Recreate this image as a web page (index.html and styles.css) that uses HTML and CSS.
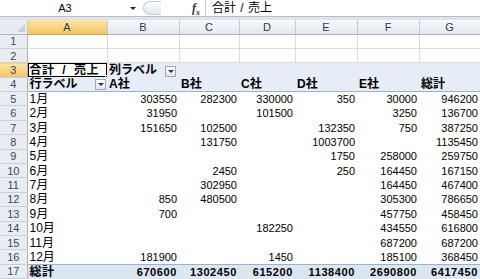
FILE: index.html
```html
<!DOCTYPE html>
<html lang="ja">
<head>
  <meta charset="UTF-8" />
  <title>ピボットテーブル</title>
  <link rel="stylesheet" href="styles.css">
</head>
<body>
  <div class="formula-bar">
    <div class="name-box">
      <span class="cell-ref">A3</span>
      <span class="caret"></span>
    </div>
    <div class="grip"></div>
    <div class="fx"><i>f</i><sub>x</sub></div>
    <div class="formula">合計 / 売上</div>
  </div>
  <div class="gap"></div>

  <table class="sheet">
    <colgroup>
      <col class="c-rh">
      <col class="c-a">
      <col class="c-b">
      <col class="c-c">
      <col class="c-d">
      <col class="c-e">
      <col class="c-f">
      <col class="c-g">
    </colgroup>
    <thead>
      <tr>
        <th class="corner"><span class="corner-tri"></span></th>
        <th class="sel">A</th>
        <th>B</th>
        <th>C</th>
        <th>D</th>
        <th>E</th>
        <th>F</th>
        <th>G</th>
      </tr>
    </thead>
    <tbody>
      <tr class="grid">
        <th>1</th><td></td><td></td><td></td><td></td><td></td><td></td><td></td>
      </tr>
      <tr class="grid">
        <th>2</th><td></td><td></td><td></td><td></td><td></td><td></td><td></td>
      </tr>
      <tr class="page-row">
        <th class="sel">3</th>
        <td class="active"><span class="label wide">合計 / 売上</span><span class="cursor"></span><span class="handle"></span></td>
        <td class="tint"><span class="label">列ラベル</span><span class="drop"></span></td>
        <td class="tint"></td><td class="tint"></td><td class="tint"></td><td class="tint"></td><td class="tint"></td>
      </tr>
      <tr class="head-row">
        <th>4</th>
        <td><div class="split"><span class="label">行ラベル</span><span class="drop"></span></div></td>
        <td><span class="label">A社</span></td>
        <td><span class="label">B社</span></td>
        <td><span class="label">C社</span></td>
        <td><span class="label">D社</span></td>
        <td><span class="label">E社</span></td>
        <td><span class="label">総計</span></td>
      </tr>
      <tr><th>5</th><td class="lbl">1月</td><td>303550</td><td>282300</td><td>330000</td><td>350</td><td>30000</td><td>946200</td></tr>
      <tr><th>6</th><td class="lbl">2月</td><td>31950</td><td></td><td>101500</td><td></td><td>3250</td><td>136700</td></tr>
      <tr><th>7</th><td class="lbl">3月</td><td>151650</td><td>102500</td><td></td><td>132350</td><td>750</td><td>387250</td></tr>
      <tr><th>8</th><td class="lbl">4月</td><td></td><td>131750</td><td></td><td>1003700</td><td></td><td>1135450</td></tr>
      <tr><th>9</th><td class="lbl">5月</td><td></td><td></td><td></td><td>1750</td><td>258000</td><td>259750</td></tr>
      <tr><th>10</th><td class="lbl">6月</td><td></td><td>2450</td><td></td><td>250</td><td>164450</td><td>167150</td></tr>
      <tr><th>11</th><td class="lbl">7月</td><td></td><td>302950</td><td></td><td></td><td>164450</td><td>467400</td></tr>
      <tr><th>12</th><td class="lbl">8月</td><td>850</td><td>480500</td><td></td><td></td><td>305300</td><td>786650</td></tr>
      <tr><th>13</th><td class="lbl">9月</td><td>700</td><td></td><td></td><td></td><td>457750</td><td>458450</td></tr>
      <tr><th>14</th><td class="lbl">10月</td><td></td><td></td><td>182250</td><td></td><td>434550</td><td>616800</td></tr>
      <tr><th>15</th><td class="lbl">11月</td><td></td><td></td><td></td><td></td><td>687200</td><td>687200</td></tr>
      <tr><th>16</th><td class="lbl">12月</td><td>181900</td><td></td><td>1450</td><td></td><td>185100</td><td>368450</td></tr>
      <tr class="total-row">
        <th>17</th><td class="lbl">総計</td><td>670600</td><td>1302450</td><td>615200</td><td>1138400</td><td>2690800</td><td>6417450</td>
      </tr>
    </tbody>
  </table>
</body>
</html>
```

FILE: styles.css
```css
* {
  box-sizing: border-box;
}

body {
  margin: 0;
  width: 480px;
  height: 279px;
  overflow: hidden;
  background: #ffffff;
  font-family: "Liberation Sans", "Noto Sans CJK JP", sans-serif;
  font-size: 11px;
  color: #000;
}

/* formula bar */
.formula-bar {
  display: flex;
  height: 17px;
  border-bottom: 1px solid #b6c0cc;
  background: #fff;
}

.name-box {
  width: 140px;
  display: flex;
  align-items: center;
}

.cell-ref {
  width: 130px;
  text-align: center;
  font-size: 11px;
}

.caret {
  width: 0;
  height: 0;
  border-left: 3px solid transparent;
  border-right: 3px solid transparent;
  border-top: 3px solid #222;
}

.grip {
  width: 18px;
  margin: 1px 0 1px 3px;
  border: 1px solid #c3cad3;
  border-right: none;
  border-radius: 8px 0 0 8px;
  background: linear-gradient(#fbfcfd, #e3e7ec);
}

.fx {
  width: 44px;
  padding-right: 5px;
  text-align: right;
  font-family: "Liberation Serif", serif;
  font-size: 12px;
  font-weight: bold;
  line-height: 16px;
  color: #333;
}

.fx sub {
  font-size: 8px;
  font-style: italic;
}

.formula {
  flex: 1;
  border-left: 1px solid #c3cad3;
  padding-left: 6px;
  font-size: 12px;
  word-spacing: 1px;
  line-height: 16px;
}

.gap {
  height: 3px;
  background: #dfe4ea;
}

/* sheet */
.sheet {
  border-collapse: collapse;
  table-layout: fixed;
  width: 480px;
}

.c-rh { width: 27px; }
.c-a { width: 80px; }
.c-b { width: 72px; }
.c-c { width: 60px; }
.c-d { width: 56px; }
.c-e { width: 62px; }
.c-f { width: 62px; }
.c-g { width: 61px; }

thead th {
  height: 14px;
  padding: 0;
  font-weight: normal;
  font-size: 11px;
  color: #2e3a4b;
  background: linear-gradient(#f7f8fa, #e4e8ed);
  border-right: 1px solid #c4cad3;
  border-bottom: 1px solid #a9b4c2;
}

thead th.sel {
  background: linear-gradient(#fbe4a8, #f3c461);
  border-bottom-color: #d9a441;
}

.corner {
  position: relative;
  background: #e8ecf0;
}

.corner-tri {
  position: absolute;
  right: 2px;
  bottom: 2px;
  width: 0;
  height: 0;
  border-left: 8px solid transparent;
  border-bottom: 8px solid #c9cfd7;
}

tbody tr {
  height: 14.4px;
}

tbody th {
  padding: 0;
  font-weight: normal;
  font-size: 11px;
  text-align: center;
  color: #3a4960;
  background: #e9edf2;
  border-right: 1px solid #a9b4c2;
  border-bottom: 1px solid #c9d0d9;
}

tbody th.sel {
  background: linear-gradient(#fbe4a8, #f3c461);
}

td {
  padding: 0 2px;
  text-align: right;
  white-space: nowrap;
  overflow: hidden;
  line-height: 12px;
}

.grid td {
  border-right: 1px solid #dadcdf;
  border-bottom: 1px solid #dadcdf;
}

td.lbl,
.page-row td,
.head-row td {
  text-align: left;
}

.label {
  font-size: 12px;
  font-weight: bold;
}

.label.wide {
  word-spacing: 4px;
  letter-spacing: 0.5px;
}

td.lbl {
  font-size: 12px;
}

.tint,
.head-row td {
  background: #e6edf6;
}

.head-row td {
  border-bottom: 1px solid #95b3d7;
}

.split {
  display: flex;
  justify-content: space-between;
  align-items: center;
}

.drop {
  display: inline-block;
  position: relative;
  width: 11px;
  height: 11px;
  margin-left: 8px;
  vertical-align: middle;
  border: 1px solid #9aa8ba;
  background: linear-gradient(#ffffff, #e2e8f0);
}

.drop::after {
  content: "";
  position: absolute;
  left: 2px;
  top: 3px;
  border-left: 3px solid transparent;
  border-right: 3px solid transparent;
  border-top: 3px solid #333;
}

.split .drop {
  margin-right: -1px;
}

td.active {
  position: relative;
  background: #fff;
}

.cursor {
  position: absolute;
  inset: -1px;
  border: 2px solid #000;
}

.handle {
  position: absolute;
  right: -3px;
  bottom: -3px;
  width: 5px;
  height: 5px;
  background: #000;
  border: 1px solid #fff;
}

.total-row td {
  font-weight: bold;
  letter-spacing: 0.6px;
  background: #dce6f1;
  border-top: 1px solid #95b3d7;
}
```
